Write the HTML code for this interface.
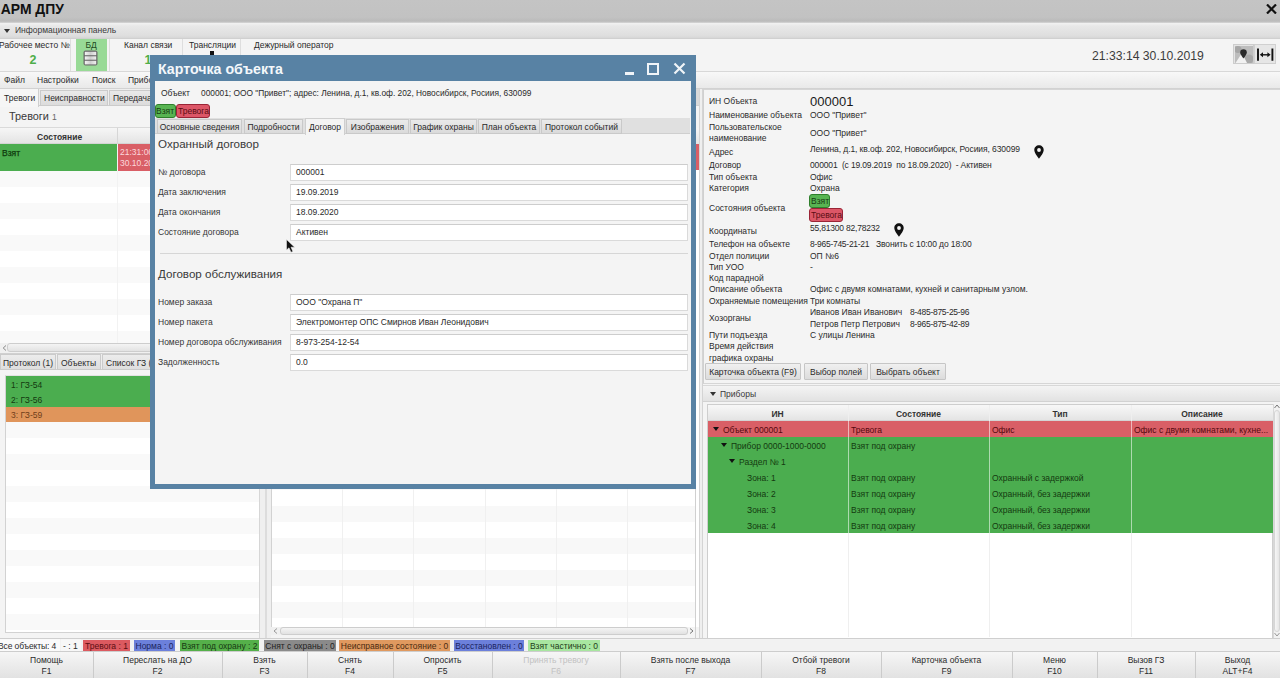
<!DOCTYPE html>
<html><head><meta charset="utf-8">
<style>
*{box-sizing:border-box;margin:0;padding:0}
html,body{width:1280px;height:678px;overflow:hidden}
body{position:relative;background:#f2f2f2;font-family:"Liberation Sans",sans-serif;font-size:8.5px;color:#2e2e2e}
.a{position:absolute;white-space:nowrap}
.t{position:absolute;white-space:nowrap;line-height:1;margin-top:0.6px}
</style></head><body>
<div class="a" style="left:0px;top:0px;width:1280px;height:23px;background:linear-gradient(#c4c4c4 0%,#c2c2c2 75%,#bababa 92%,#d8d8d8 100%)"></div>
<div class="t" style="left:0.8px;top:2.40px;font-size:13.9px;font-weight:bold;color:#111">АРМ ДПУ</div>
<svg class="a" style="left:1266px;top:4px" width="11" height="10" viewBox="0 0 11 10"><path d="M1 0.5L10 9.5M10 0.5L1 9.5" stroke="#111" stroke-width="2.2"/></svg>
<div class="a" style="left:0px;top:23px;width:1280px;height:16px;background:linear-gradient(#f2f2f2,#e8e8e8 20%,#dedede 85%,#d6d6d6);border-bottom:1px solid #d0d0d0"></div>
<svg class="a" style="left:4px;top:28.5px" width="6" height="4"><path d="M0 0H6L3.0 4Z" fill="#333"/></svg>
<div class="t" style="left:15px;top:25.80px;color:#3a3a3a">Информационная панель</div>
<div class="a" style="left:0px;top:39px;width:1280px;height:33px;background:#f4f4f4;border-bottom:1px solid #d8d8d8"></div>
<div class="a" style="left:70px;top:39px;width:1px;height:32px;background:#dedede"></div>
<div class="a" style="left:76px;top:39px;width:31px;height:32px;background:#98da96"></div>
<div class="a" style="left:109px;top:39px;width:1px;height:32px;background:#dedede"></div>
<div class="a" style="left:182px;top:39px;width:1px;height:32px;background:#dedede"></div>
<div class="a" style="left:240px;top:39px;width:1px;height:32px;background:#dedede"></div>
<div class="t" style="left:-1px;top:40.20px;color:#2a2a2a">Рабочее место №</div>
<div class="t" style="left:29.5px;top:53.20px;font-size:12.5px;font-weight:bold;color:#4fae4a">2</div>
<div class="t" style="left:85.5px;top:40.20px;color:#1f4a1f">БД</div>
<svg class="a" style="left:83px;top:49.5px" width="15" height="16" viewBox="0 0 15 16">
<defs><linearGradient id="dbg" x1="0" x2="1" y1="0" y2="0"><stop offset="0" stop-color="#f4f4f4"/><stop offset="0.5" stop-color="#cfcfcf"/><stop offset="1" stop-color="#eeeeee"/></linearGradient></defs>
<rect x="0.5" y="0.5" width="14" height="15" rx="2" fill="#6a6a6a"/>
<rect x="1.8" y="1.8" width="11.4" height="3.4" fill="url(#dbg)"/>
<rect x="1.8" y="6.3" width="11.4" height="3.4" fill="url(#dbg)"/>
<rect x="1.8" y="10.8" width="11.4" height="3.6" fill="url(#dbg)"/>
</svg>
<div class="t" style="left:124px;top:40.20px;color:#2a2a2a">Канал связи</div>
<div class="t" style="left:144.5px;top:53.20px;font-size:12.5px;font-weight:bold;color:#4fae4a">1</div>
<div class="t" style="left:189px;top:40.20px;color:#2a2a2a">Трансляции</div>
<div class="a" style="left:210px;top:51px;width:4px;height:4px;background:#111"></div>
<div class="t" style="left:254px;top:40.20px;color:#2a2a2a">Дежурный оператор</div>
<div class="t" style="left:1092px;top:49.30px;font-size:12.2px;color:#3c3c3c">21:33:14 30.10.2019</div>
<div class="a" style="left:1233px;top:44px;width:21px;height:20px;background:#e4e4e4;border:1px solid #cdcdcd"></div>
<svg class="a" style="left:1235px;top:46px" width="18" height="17" viewBox="0 0 18 17"><rect x="0" y="0" width="18" height="17" fill="#bdbdbd"/><circle cx="3" cy="3.5" r="3.5" fill="#a6a6a6"/><circle cx="14" cy="13" r="4.5" fill="#a8a8a8"/><path d="M0.5 17L7 7L12 17Z" fill="#f2f2f2"/><path d="M8.5 3.2a3.3 3.3 0 0 1 3.3 3.3c0 2.2-3.3 6-3.3 6s-3.3-3.8-3.3-6a3.3 3.3 0 0 1 3.3-3.3z" fill="#2a2a2a"/></svg>
<div class="a" style="left:1254px;top:44px;width:22px;height:20px;background:#e6e6e6;border:1px solid #d0d0d0"></div>
<svg class="a" style="left:1256px;top:48px" width="19" height="14" viewBox="0 0 19 14"><path d="M2 0.6V12.8M16.4 0.6V12.8" stroke="#111" stroke-width="1.9"/><path d="M6 6.8H12.5" stroke="#111" stroke-width="1.4"/><path d="M3.8 6.8L7 4.3V9.3ZM14.6 6.8L11.4 4.3V9.3Z" fill="#111"/></svg>
<div class="a" style="left:0px;top:72px;width:1280px;height:17px;background:linear-gradient(#f8f8f8,#e9e9e9);border-bottom:1px solid #d2d2d2"></div>
<div class="t" style="left:4px;top:75.80px;color:#2a2a2a">Файл</div>
<div class="t" style="left:37px;top:75.80px;color:#2a2a2a">Настройки</div>
<div class="t" style="left:92px;top:75.80px;color:#2a2a2a">Поиск</div>
<div class="t" style="left:128px;top:75.80px;color:#2a2a2a">Приборы</div>
<div class="a" style="left:0px;top:89px;width:260px;height:265px;background:#f4f4f4"></div>
<div class="a" style="left:0px;top:89px;width:260px;height:17px;background:#eeeeee;border-bottom:1px solid #cfcfcf"></div>
<div class="a" style="left:0px;top:89px;width:39px;height:18px;background:#f6f6f6;border-right:1px solid #cfcfcf"></div>
<div class="a" style="left:40px;top:90px;width:68px;height:16px;background:linear-gradient(#e9e9e9,#dcdcdc);border:1px solid #cbcbcb"></div>
<div class="a" style="left:109px;top:90px;width:151px;height:16px;background:linear-gradient(#e9e9e9,#dcdcdc);border:1px solid #cbcbcb"></div>
<div class="t" style="left:4px;top:93.80px;color:#2a2a2a">Тревоги</div>
<div class="t" style="left:44px;top:93.80px;color:#2a2a2a">Неисправности</div>
<div class="t" style="left:113px;top:93.80px;color:#2a2a2a">Передача</div>
<div class="t" style="left:9px;top:110.80px;font-size:10.9px;color:#3a3a3a">Тревоги <span style="font-size:8.5px;color:#666">1</span></div>
<div class="a" style="left:0px;top:127px;width:260px;height:17px;background:linear-gradient(#f6f6f6,#e4e4e4);border-top:1px solid #dadada;border-bottom:1px solid #d4d4d4"></div>
<div class="a" style="left:117px;top:128px;width:1px;height:16px;background:#d6d6d6"></div>
<div class="t" style="left:37px;top:132.30px;font-weight:bold;color:#333">Состояние</div>
<div class="a" style="left:0px;top:171px;width:260px;height:16px;background:#f9f9f9"></div>
<div class="a" style="left:0px;top:187px;width:260px;height:16px;background:#ffffff"></div>
<div class="a" style="left:0px;top:203px;width:260px;height:16px;background:#f9f9f9"></div>
<div class="a" style="left:0px;top:219px;width:260px;height:16px;background:#ffffff"></div>
<div class="a" style="left:0px;top:235px;width:260px;height:16px;background:#f9f9f9"></div>
<div class="a" style="left:0px;top:251px;width:260px;height:16px;background:#ffffff"></div>
<div class="a" style="left:0px;top:267px;width:260px;height:16px;background:#f9f9f9"></div>
<div class="a" style="left:0px;top:283px;width:260px;height:16px;background:#ffffff"></div>
<div class="a" style="left:0px;top:299px;width:260px;height:16px;background:#f9f9f9"></div>
<div class="a" style="left:0px;top:315px;width:260px;height:16px;background:#ffffff"></div>
<div class="a" style="left:0px;top:331px;width:260px;height:12px;background:#f9f9f9"></div>
<div class="a" style="left:117px;top:171px;width:1px;height:172px;background:#f2f2f2"></div>
<div class="a" style="left:0px;top:144px;width:117px;height:27px;background:#4bad4f"></div>
<div class="a" style="left:118px;top:144px;width:142px;height:27px;background:#d95f66"></div>
<div class="t" style="left:2px;top:148.00px;color:#0e3a0c;-webkit-text-stroke:0.25px #0e3a0c">Взят</div>
<div class="t" style="left:120px;top:146.6px;color:#fbd8dc;line-height:11px">21:31:06<br>30.10.2019</div>
<div class="a" style="left:0px;top:343px;width:260px;height:10px;background:#f0f0f0"></div>
<div class="a" style="left:7px;top:343px;width:253px;height:9px;background:linear-gradient(#f4f4f4,#e2e2e2);border:1px solid #cdcdcd;border-radius:3px"></div>
<svg class="a" style="left:2px;top:344.5px" width="5" height="6"><path d="M4 0.5L1.2 3L4 5.5" stroke="#888" stroke-width="1" fill="none"/></svg>
<div class="a" style="left:0px;top:353px;width:260px;height:1px;background:#d0d0d0"></div>
<div class="a" style="left:0px;top:354px;width:260px;height:285px;background:#f4f4f4"></div>
<div class="a" style="left:0px;top:354px;width:260px;height:16px;background:#eeeeee;border-bottom:1px solid #cfcfcf"></div>
<div class="a" style="left:0px;top:354px;width:56px;height:16px;background:linear-gradient(#ececec,#dedede);border:1px solid #cbcbcb"></div>
<div class="a" style="left:57px;top:354px;width:44px;height:16px;background:linear-gradient(#ececec,#dedede);border:1px solid #cbcbcb"></div>
<div class="a" style="left:102px;top:354px;width:158px;height:16px;background:linear-gradient(#ececec,#dedede);border:1px solid #cbcbcb"></div>
<div class="t" style="left:3px;top:358.70px;color:#2a2a2a">Протокол (1)</div>
<div class="t" style="left:61px;top:358.70px;color:#2a2a2a">Объекты</div>
<div class="t" style="left:106px;top:358.70px;color:#2a2a2a">Список ГЗ (3)</div>
<div class="a" style="left:5px;top:375px;width:255px;height:258px;background:#fff;border-left:1px solid #d2d2d2;border-top:1px solid #e2e2e2;border-bottom:1px solid #d2d2d2"></div>
<div class="a" style="left:6px;top:422px;width:254px;height:16px;background:#f9f9f9"></div>
<div class="a" style="left:6px;top:438px;width:254px;height:16px;background:#ffffff"></div>
<div class="a" style="left:6px;top:454px;width:254px;height:16px;background:#f9f9f9"></div>
<div class="a" style="left:6px;top:470px;width:254px;height:16px;background:#ffffff"></div>
<div class="a" style="left:6px;top:486px;width:254px;height:16px;background:#f9f9f9"></div>
<div class="a" style="left:6px;top:502px;width:254px;height:16px;background:#ffffff"></div>
<div class="a" style="left:6px;top:518px;width:254px;height:16px;background:#f9f9f9"></div>
<div class="a" style="left:6px;top:534px;width:254px;height:16px;background:#ffffff"></div>
<div class="a" style="left:6px;top:550px;width:254px;height:16px;background:#f9f9f9"></div>
<div class="a" style="left:6px;top:566px;width:254px;height:16px;background:#ffffff"></div>
<div class="a" style="left:6px;top:582px;width:254px;height:16px;background:#f9f9f9"></div>
<div class="a" style="left:6px;top:598px;width:254px;height:16px;background:#ffffff"></div>
<div class="a" style="left:6px;top:614px;width:254px;height:16px;background:#f9f9f9"></div>
<div class="a" style="left:6px;top:630px;width:254px;height:2px;background:#ffffff"></div>
<div class="a" style="left:6px;top:376px;width:254px;height:31px;background:#4bad4f"></div>
<div class="a" style="left:6px;top:407px;width:254px;height:15px;background:#e0955b"></div>
<div class="t" style="left:11px;top:380.60px;color:#143a10">1: ГЗ-54</div>
<div class="t" style="left:11px;top:395.60px;color:#143a10">2: ГЗ-56</div>
<div class="t" style="left:11px;top:410.60px;color:#70401a">3: ГЗ-59</div>
<div class="a" style="left:0px;top:638px;width:260px;height:1px;background:#cfcfcf"></div>
<div class="a" style="left:259px;top:89px;width:1px;height:550px;background:#d6d6d6"></div>
<div class="a" style="left:260px;top:89px;width:11px;height:550px;background:#efefef"></div>
<div class="a" style="left:265px;top:89px;width:2px;height:550px;background:#dcdcdc"></div>
<div class="a" style="left:271px;top:89px;width:428px;height:550px;background:#f4f4f4"></div>
<div class="a" style="left:271px;top:89px;width:428px;height:17px;background:#d9d9d9;border-bottom:1px solid #cfcfcf"></div>
<div class="a" style="left:271px;top:128px;width:428px;height:16px;background:linear-gradient(#f6f6f6,#e4e4e4)"></div>
<div class="a" style="left:271px;top:144px;width:428px;height:483px;background:#fff;border-left:1px solid #d2d2d2"></div>
<div class="a" style="left:272px;top:170px;width:423px;height:16px;background:#ffffff"></div>
<div class="a" style="left:272px;top:186px;width:423px;height:16px;background:#f8f8f8"></div>
<div class="a" style="left:272px;top:202px;width:423px;height:16px;background:#ffffff"></div>
<div class="a" style="left:272px;top:218px;width:423px;height:16px;background:#f8f8f8"></div>
<div class="a" style="left:272px;top:234px;width:423px;height:16px;background:#ffffff"></div>
<div class="a" style="left:272px;top:250px;width:423px;height:16px;background:#f8f8f8"></div>
<div class="a" style="left:272px;top:266px;width:423px;height:16px;background:#ffffff"></div>
<div class="a" style="left:272px;top:282px;width:423px;height:16px;background:#f8f8f8"></div>
<div class="a" style="left:272px;top:298px;width:423px;height:16px;background:#ffffff"></div>
<div class="a" style="left:272px;top:314px;width:423px;height:16px;background:#f8f8f8"></div>
<div class="a" style="left:272px;top:330px;width:423px;height:16px;background:#ffffff"></div>
<div class="a" style="left:272px;top:346px;width:423px;height:16px;background:#f8f8f8"></div>
<div class="a" style="left:272px;top:362px;width:423px;height:16px;background:#ffffff"></div>
<div class="a" style="left:272px;top:378px;width:423px;height:16px;background:#f8f8f8"></div>
<div class="a" style="left:272px;top:394px;width:423px;height:16px;background:#ffffff"></div>
<div class="a" style="left:272px;top:410px;width:423px;height:16px;background:#f8f8f8"></div>
<div class="a" style="left:272px;top:426px;width:423px;height:16px;background:#ffffff"></div>
<div class="a" style="left:272px;top:442px;width:423px;height:16px;background:#f8f8f8"></div>
<div class="a" style="left:272px;top:458px;width:423px;height:16px;background:#ffffff"></div>
<div class="a" style="left:272px;top:474px;width:423px;height:16px;background:#f8f8f8"></div>
<div class="a" style="left:272px;top:490px;width:423px;height:16px;background:#ffffff"></div>
<div class="a" style="left:272px;top:506px;width:423px;height:16px;background:#f8f8f8"></div>
<div class="a" style="left:272px;top:522px;width:423px;height:16px;background:#ffffff"></div>
<div class="a" style="left:272px;top:538px;width:423px;height:16px;background:#f8f8f8"></div>
<div class="a" style="left:272px;top:554px;width:423px;height:16px;background:#ffffff"></div>
<div class="a" style="left:272px;top:570px;width:423px;height:16px;background:#f8f8f8"></div>
<div class="a" style="left:272px;top:586px;width:423px;height:16px;background:#ffffff"></div>
<div class="a" style="left:272px;top:602px;width:423px;height:16px;background:#f8f8f8"></div>
<div class="a" style="left:272px;top:618px;width:423px;height:9px;background:#ffffff"></div>
<div class="a" style="left:342px;top:170px;width:1px;height:457px;background:#f0f0f0"></div>
<div class="a" style="left:413px;top:170px;width:1px;height:457px;background:#f0f0f0"></div>
<div class="a" style="left:485px;top:170px;width:1px;height:457px;background:#f0f0f0"></div>
<div class="a" style="left:556px;top:170px;width:1px;height:457px;background:#f0f0f0"></div>
<div class="a" style="left:627px;top:170px;width:1px;height:457px;background:#f0f0f0"></div>
<div class="a" style="left:272px;top:144px;width:427px;height:26px;background:#d95f66"></div>
<div class="a" style="left:271px;top:627px;width:424px;height:8px;background:#f0f0f0"></div>
<div class="a" style="left:280px;top:627px;width:408px;height:8px;background:linear-gradient(#f4f4f4,#e2e2e2);border:1px solid #cdcdcd;border-radius:3px"></div>
<div class="a" style="left:688px;top:627px;width:7px;height:8px;background:#f4f4f4"></div>
<svg class="a" style="left:689px;top:628px" width="5" height="6"><path d="M1 0.5L4 3L1 5.5" stroke="#777" stroke-width="1" fill="none"/></svg>
<svg class="a" style="left:273px;top:628px" width="5" height="6"><path d="M4 0.5L1 3L4 5.5" stroke="#999" stroke-width="1" fill="none"/></svg>
<div class="a" style="left:695px;top:144px;width:1px;height:494px;background:#d0d0d0"></div>
<div class="a" style="left:271px;top:638px;width:428px;height:1px;background:#cfcfcf"></div>
<div class="a" style="left:699px;top:89px;width:4px;height:550px;background:#efefef"></div>
<div class="a" style="left:699px;top:89px;width:1px;height:550px;background:#d4d4d4"></div>
<div class="a" style="left:702px;top:89px;width:1px;height:550px;background:#d4d4d4"></div>
<div class="a" style="left:703px;top:89px;width:577px;height:550px;background:#f4f4f4"></div>
<div class="a" style="left:703px;top:89px;width:577px;height:295px;border-left:1px solid #d0d0d0;border-top:1px solid #d6d6d6;border-bottom:1px solid #d6d6d6"></div>
<div class="t" style="left:709px;top:96.10px;color:#2a2a2a;">ИН Объекта</div>
<div class="t" style="left:810px;top:94.20px;font-size:13px;color:#1a1a1a">000001</div>
<div class="t" style="left:709px;top:110.70px;color:#2a2a2a;">Наименование объекта</div>
<div class="t" style="left:810px;top:110.70px;color:#2a2a2a;">ООО "Привет"</div>
<div class="t" style="left:709px;top:122.10px;color:#2a2a2a;">Пользовательское</div>
<div class="t" style="left:709px;top:133.50px;color:#2a2a2a;">наименование</div>
<div class="t" style="left:810px;top:128.30px;color:#2a2a2a;">ООО "Привет"</div>
<div class="t" style="left:709px;top:147.50px;color:#2a2a2a;">Адрес</div>
<div class="t" style="left:810px;top:144.40px;color:#2a2a2a;letter-spacing:-0.08px">Ленина, д.1, кв.оф. 202, Новосибирск, Росиия, 630099</div>
<div class="t" style="left:709px;top:160.90px;color:#2a2a2a;">Договор</div>
<div class="t" style="left:810px;top:160.90px;color:#2a2a2a;letter-spacing:-0.15px">000001&nbsp; (с 19.09.2019&nbsp; по 18.09.2020)&nbsp; - Активен</div>
<div class="t" style="left:709px;top:172.50px;color:#2a2a2a;">Тип объекта</div>
<div class="t" style="left:810px;top:172.50px;color:#2a2a2a;">Офис</div>
<div class="t" style="left:709px;top:183.90px;color:#2a2a2a;">Категория</div>
<div class="t" style="left:810px;top:183.90px;color:#2a2a2a;">Охрана</div>
<div class="a" style="left:809px;top:194px;width:21px;height:14px;background:#58b452;border:1px solid #2f7f2c;border-radius:3px"></div>
<div class="t" style="left:811px;top:196.80px;color:#173a12">Взят</div>
<div class="t" style="left:709px;top:203.70px;color:#2a2a2a;">Состояния объекта</div>
<div class="a" style="left:809px;top:208px;width:34px;height:14px;background:#dc5667;border:1px solid #9a2436;border-radius:3px"></div>
<div class="t" style="left:811px;top:210.80px;color:#5a0d12">Тревога</div>
<div class="t" style="left:709px;top:226.00px;color:#2a2a2a;">Координаты</div>
<div class="t" style="left:810px;top:223.30px;color:#2a2a2a;letter-spacing:-0.2px">55,81300 82,78232</div>
<div class="t" style="left:709px;top:239.20px;color:#2a2a2a;">Телефон на объекте</div>
<div class="t" style="left:810px;top:239.20px;color:#2a2a2a;letter-spacing:-0.27px">8-965-745-21-21</div>
<div class="t" style="left:876px;top:239.20px;color:#2a2a2a;letter-spacing:-0.1px">Звонить с 10:00 до 18:00</div>
<div class="t" style="left:709px;top:251.10px;color:#2a2a2a;">Отдел полиции</div>
<div class="t" style="left:810px;top:251.10px;color:#2a2a2a;">ОП №6</div>
<div class="t" style="left:709px;top:262.50px;color:#2a2a2a;">Тип УОО</div>
<div class="t" style="left:810px;top:262.50px;color:#2a2a2a;">-</div>
<div class="t" style="left:709px;top:273.70px;color:#2a2a2a;">Код парадной</div>
<div class="t" style="left:709px;top:284.90px;color:#2a2a2a;">Описание объекта</div>
<div class="t" style="left:810px;top:284.90px;color:#2a2a2a;">Офис с двумя комнатами, кухней и санитарным узлом.</div>
<div class="t" style="left:709px;top:296.90px;color:#2a2a2a;">Охраняемые помещения</div>
<div class="t" style="left:810px;top:296.90px;color:#2a2a2a;">Три комнаты</div>
<div class="t" style="left:709px;top:313.60px;color:#2a2a2a;">Хозорганы</div>
<div class="t" style="left:810px;top:307.40px;color:#2a2a2a;">Иванов Иван Иванович</div>
<div class="t" style="left:810px;top:319.40px;color:#2a2a2a;">Петров Петр Петрович</div>
<div class="t" style="left:910px;top:307.40px;color:#2a2a2a;letter-spacing:-0.27px">8-485-875-25-96</div>
<div class="t" style="left:910px;top:319.40px;color:#2a2a2a;letter-spacing:-0.27px">8-965-875-42-89</div>
<div class="t" style="left:709px;top:330.90px;color:#2a2a2a;">Пути подъезда</div>
<div class="t" style="left:810px;top:330.90px;color:#2a2a2a;">С улицы Ленина</div>
<div class="t" style="left:709px;top:341.90px;color:#2a2a2a;">Время действия</div>
<div class="t" style="left:709px;top:353.40px;color:#2a2a2a;">графика охраны</div>
<svg class="a" style="left:1034px;top:145px" width="10" height="14" viewBox="0 0 10 14"><path d="M5 0.3C2.3 0.3 0.3 2.4 0.3 5C0.3 8.3 5 13.7 5 13.7S9.7 8.3 9.7 5C9.7 2.4 7.7 0.3 5 0.3ZM5 3.1A1.9 1.9 0 1 1 5 6.9A1.9 1.9 0 1 1 5 3.1Z" fill="#111" fill-rule="evenodd"/></svg>
<svg class="a" style="left:894px;top:223px" width="10" height="14" viewBox="0 0 10 14"><path d="M5 0.3C2.3 0.3 0.3 2.4 0.3 5C0.3 8.3 5 13.7 5 13.7S9.7 8.3 9.7 5C9.7 2.4 7.7 0.3 5 0.3ZM5 3.1A1.9 1.9 0 1 1 5 6.9A1.9 1.9 0 1 1 5 3.1Z" fill="#111" fill-rule="evenodd"/></svg>
<div class="a" style="left:705px;top:363px;width:96px;height:17px;background:linear-gradient(#f0f0f0,#dcdcdc);border:1px solid #c6c6c6;border-radius:1px"></div>
<div class="t" style="left:705px;top:367.3px;width:96px;text-align:center;color:#2a2a2a">Карточка объекта (F9)</div>
<div class="a" style="left:804px;top:363px;width:64px;height:17px;background:linear-gradient(#f0f0f0,#dcdcdc);border:1px solid #c6c6c6;border-radius:1px"></div>
<div class="t" style="left:804px;top:367.3px;width:64px;text-align:center;color:#2a2a2a">Выбор полей</div>
<div class="a" style="left:870px;top:363px;width:76px;height:17px;background:linear-gradient(#f0f0f0,#dcdcdc);border:1px solid #c6c6c6;border-radius:1px"></div>
<div class="t" style="left:870px;top:367.3px;width:76px;text-align:center;color:#2a2a2a">Выбрать объект</div>
<div class="a" style="left:703px;top:385px;width:577px;height:17px;background:linear-gradient(#f4f4f4,#e2e2e2);border-top:1px solid #d8d8d8;border-bottom:1px solid #d2d2d2"></div>
<svg class="a" style="left:710px;top:392px" width="6" height="4"><path d="M0 0H6L3.0 4Z" fill="#333"/></svg>
<div class="t" style="left:720px;top:389.40px;color:#2a2a2a;color:#3a3a3a">Приборы</div>
<div class="a" style="left:707px;top:404px;width:566px;height:235px;background:#fff;border:1px solid #cecece"></div>
<div class="a" style="left:708px;top:405px;width:565px;height:16px;background:linear-gradient(#f8f8f8,#e4e4e4);border-bottom:1px solid #d4d4d4"></div>
<div class="t" style="left:707px;top:409.3px;width:141px;text-align:center;font-weight:bold;color:#333">ИН</div>
<div class="t" style="left:848px;top:409.3px;width:141px;text-align:center;font-weight:bold;color:#333">Состояние</div>
<div class="t" style="left:989px;top:409.3px;width:142px;text-align:center;font-weight:bold;color:#333">Тип</div>
<div class="t" style="left:1131px;top:409.3px;width:142px;text-align:center;font-weight:bold;color:#333">Описание</div>
<div class="a" style="left:848px;top:405px;width:1px;height:232px;background:#efefef"></div>
<div class="a" style="left:989px;top:405px;width:1px;height:232px;background:#efefef"></div>
<div class="a" style="left:1131px;top:405px;width:1px;height:232px;background:#efefef"></div>
<div class="a" style="left:708px;top:421px;width:565px;height:16px;background:#d95f66"></div>
<div class="a" style="left:708px;top:437px;width:565px;height:96px;background:#4bad4f"></div>
<div class="a" style="left:848px;top:421px;width:1px;height:112px;background:rgba(255,255,255,0.55)"></div>
<div class="a" style="left:989px;top:421px;width:1px;height:112px;background:rgba(255,255,255,0.55)"></div>
<div class="a" style="left:1131px;top:421px;width:1px;height:112px;background:rgba(255,255,255,0.55)"></div>
<svg class="a" style="left:712.5px;top:427px" width="6" height="4"><path d="M0 0H6L3.0 4Z" fill="#111"/></svg>
<div class="t" style="left:723px;top:425.40px;color:#2a2a2a;color:#55080e">Объект 000001</div>
<div class="t" style="left:851px;top:425.40px;color:#2a2a2a;color:#55080e">Тревога</div>
<div class="t" style="left:992px;top:425.40px;color:#2a2a2a;color:#55080e">Офис</div>
<div class="t" style="left:1134px;top:425.40px;color:#2a2a2a;color:#55080e">Офис с двумя комнатами, кухне...</div>
<svg class="a" style="left:720.5px;top:443px" width="6" height="4"><path d="M0 0H6L3.0 4Z" fill="#111"/></svg>
<div class="t" style="left:731px;top:441.40px;color:#2a2a2a;color:#143a10">Прибор 0000-1000-0000</div>
<div class="t" style="left:851px;top:441.40px;color:#2a2a2a;color:#143a10">Взят под охрану</div>
<svg class="a" style="left:728.5px;top:459px" width="6" height="4"><path d="M0 0H6L3.0 4Z" fill="#111"/></svg>
<div class="t" style="left:739px;top:457.40px;color:#2a2a2a;color:#143a10">Раздел № 1</div>
<div class="t" style="left:747px;top:473.40px;color:#2a2a2a;color:#143a10">Зона: 1</div>
<div class="t" style="left:851px;top:473.40px;color:#2a2a2a;color:#143a10">Взят под охрану</div>
<div class="t" style="left:992px;top:473.40px;color:#2a2a2a;color:#143a10">Охранный с задержкой</div>
<div class="t" style="left:747px;top:489.40px;color:#2a2a2a;color:#143a10">Зона: 2</div>
<div class="t" style="left:851px;top:489.40px;color:#2a2a2a;color:#143a10">Взят под охрану</div>
<div class="t" style="left:992px;top:489.40px;color:#2a2a2a;color:#143a10">Охранный, без задержки</div>
<div class="t" style="left:747px;top:505.40px;color:#2a2a2a;color:#143a10">Зона: 3</div>
<div class="t" style="left:851px;top:505.40px;color:#2a2a2a;color:#143a10">Взят под охрану</div>
<div class="t" style="left:992px;top:505.40px;color:#2a2a2a;color:#143a10">Охранный, без задержки</div>
<div class="t" style="left:747px;top:521.40px;color:#2a2a2a;color:#143a10">Зона: 4</div>
<div class="t" style="left:851px;top:521.40px;color:#2a2a2a;color:#143a10">Взят под охрану</div>
<div class="t" style="left:992px;top:521.40px;color:#2a2a2a;color:#143a10">Охранный, без задержки</div>
<div class="a" style="left:1273px;top:404px;width:7px;height:235px;background:#f2f2f2;border-left:1px solid #d8d8d8"></div>
<div class="a" style="left:1274px;top:410px;width:6px;height:222px;background:linear-gradient(90deg,#f6f6f6,#e6e6e6);border:1px solid #d6d6d6;border-radius:3px"></div>
<svg class="a" style="left:1274px;top:404px" width="6" height="5"><path d="M0.5 4L3 1L5.5 4" stroke="#777" stroke-width="1" fill="none"/></svg>
<svg class="a" style="left:1274px;top:632px" width="6" height="5"><path d="M0.5 1L3 4L5.5 1" stroke="#999" stroke-width="1" fill="none"/></svg>
<div class="a" style="left:150px;top:55px;width:546px;height:434px;background:#5882a4"></div>
<div class="a" style="left:155px;top:81px;width:536px;height:403px;background:#f4f4f4"></div>
<div class="t" style="left:158px;top:61.80px;font-size:14.2px;font-weight:bold;color:#f4f8fb">Карточка объекта</div>
<div class="a" style="left:625px;top:72px;width:9px;height:3px;background:#f0f4f8"></div>
<div class="a" style="left:647px;top:63px;width:12px;height:12px;border:2px solid #f0f4f8;border-top-width:2.5px"></div>
<svg class="a" style="left:673px;top:62px" width="13" height="13" viewBox="0 0 13 13"><path d="M1.5 1.5L11.5 11.5M11.5 1.5L1.5 11.5" stroke="#f0f4f8" stroke-width="2.2"/></svg>
<div class="t" style="left:161px;top:88.50px;color:#2a2a2a">Объект</div>
<div class="t" style="left:201px;top:88.50px;color:#2a2a2a;font-size:8.35px">000001; ООО "Привет"; адрес: Ленина, д.1, кв.оф. 202, Новосибирск, Росиия, 630099</div>
<div class="a" style="left:155px;top:104px;width:21px;height:14px;background:#58b452;border:1px solid #2f7f2c;border-radius:3px"></div>
<div class="t" style="left:156px;top:106.80px;color:#173a12">Взят</div>
<div class="a" style="left:176px;top:104px;width:34px;height:14px;background:#dc5667;border:1px solid #9a2436;border-radius:3px"></div>
<div class="t" style="left:178px;top:106.80px;color:#5a0d12">Тревога</div>
<div class="a" style="left:155px;top:118px;width:535px;height:16px;background:#e0e0e0;border-bottom:1px solid #cfcfcf"></div>
<div class="a" style="left:157px;top:119px;width:85px;height:15px;background:linear-gradient(#eaeaea,#dadada);border:1px solid #c9c9c9"></div>
<div class="t" style="left:157px;top:122.8px;width:85px;text-align:center;color:#2a2a2a">Основные сведения</div>
<div class="a" style="left:244px;top:119px;width:59px;height:15px;background:linear-gradient(#eaeaea,#dadada);border:1px solid #c9c9c9"></div>
<div class="t" style="left:244px;top:122.8px;width:59px;text-align:center;color:#2a2a2a">Подробности</div>
<div class="a" style="left:305px;top:118px;width:40px;height:17px;background:#f4f4f4;border:1px solid #cfcfcf;border-bottom:none"></div>
<div class="t" style="left:305px;top:122.8px;width:40px;text-align:center;color:#2a2a2a">Договор</div>
<div class="a" style="left:346px;top:119px;width:63px;height:15px;background:linear-gradient(#eaeaea,#dadada);border:1px solid #c9c9c9"></div>
<div class="t" style="left:346px;top:122.8px;width:63px;text-align:center;color:#2a2a2a">Изображения</div>
<div class="a" style="left:410px;top:119px;width:67px;height:15px;background:linear-gradient(#eaeaea,#dadada);border:1px solid #c9c9c9"></div>
<div class="t" style="left:410px;top:122.8px;width:67px;text-align:center;color:#2a2a2a">График охраны</div>
<div class="a" style="left:478px;top:119px;width:62px;height:15px;background:linear-gradient(#eaeaea,#dadada);border:1px solid #c9c9c9"></div>
<div class="t" style="left:478px;top:122.8px;width:62px;text-align:center;color:#2a2a2a">План объекта</div>
<div class="a" style="left:541px;top:119px;width:81px;height:15px;background:linear-gradient(#eaeaea,#dadada);border:1px solid #c9c9c9"></div>
<div class="t" style="left:541px;top:122.8px;width:81px;text-align:center;color:#2a2a2a">Протокол событий</div>
<div class="t" style="left:158px;top:137.80px;font-size:11.6px;color:#3a3a3a">Охранный договор</div>
<div class="t" style="left:158px;top:267.90px;font-size:11.6px;color:#3a3a3a">Договор обслуживания</div>
<div class="a" style="left:160px;top:253px;width:528px;height:1px;background:#d6d6d6"></div>
<div class="a" style="left:290px;top:164px;width:398px;height:17px;background:#fff;border:1px solid #dadada;border-top-color:#cdcdcd"></div>
<div class="t" style="left:158px;top:167.70px;color:#363636">№ договора</div>
<div class="t" style="left:296px;top:167.70px;color:#2a2a2a">000001</div>
<div class="a" style="left:290px;top:184px;width:398px;height:17px;background:#fff;border:1px solid #dadada;border-top-color:#cdcdcd"></div>
<div class="t" style="left:158px;top:187.70px;color:#363636">Дата заключения</div>
<div class="t" style="left:296px;top:187.70px;color:#2a2a2a">19.09.2019</div>
<div class="a" style="left:290px;top:204px;width:398px;height:17px;background:#fff;border:1px solid #dadada;border-top-color:#cdcdcd"></div>
<div class="t" style="left:158px;top:207.70px;color:#363636">Дата окончания</div>
<div class="t" style="left:296px;top:207.70px;color:#2a2a2a">18.09.2020</div>
<div class="a" style="left:290px;top:224px;width:398px;height:17px;background:#fff;border:1px solid #dadada;border-top-color:#cdcdcd"></div>
<div class="t" style="left:158px;top:227.70px;color:#363636">Состояние договора</div>
<div class="t" style="left:296px;top:227.70px;color:#2a2a2a">Активен</div>
<div class="a" style="left:290px;top:294px;width:398px;height:17px;background:#fff;border:1px solid #dadada;border-top-color:#cdcdcd"></div>
<div class="t" style="left:158px;top:297.70px;color:#363636">Номер заказа</div>
<div class="t" style="left:296px;top:297.70px;color:#2a2a2a">ООО "Охрана П"</div>
<div class="a" style="left:290px;top:314px;width:398px;height:17px;background:#fff;border:1px solid #dadada;border-top-color:#cdcdcd"></div>
<div class="t" style="left:158px;top:317.70px;color:#363636">Номер пакета</div>
<div class="t" style="left:296px;top:317.70px;color:#2a2a2a">Электромонтер ОПС Смирнов Иван Леонидович</div>
<div class="a" style="left:290px;top:334px;width:398px;height:17px;background:#fff;border:1px solid #dadada;border-top-color:#cdcdcd"></div>
<div class="t" style="left:158px;top:337.70px;color:#363636">Номер договора обслуживания</div>
<div class="t" style="left:296px;top:337.70px;color:#2a2a2a">8-973-254-12-54</div>
<div class="a" style="left:290px;top:354px;width:398px;height:17px;background:#fff;border:1px solid #dadada;border-top-color:#cdcdcd"></div>
<div class="t" style="left:158px;top:357.70px;color:#363636">Задолженность</div>
<div class="t" style="left:296px;top:357.70px;color:#2a2a2a">0.0</div>
<svg class="a" style="left:285.5px;top:238.5px" width="10" height="14" viewBox="0 0 10 14"><path d="M0.5 0.5V11L3 8.8L5 13.2L6.9 12.4L5 8.2H8.6Z" fill="#111" stroke="#f4f4f4" stroke-width="0.5"/></svg>
<div class="a" style="left:0px;top:638px;width:1280px;height:1px;background:#cfcfcf"></div>
<div class="a" style="left:0px;top:639px;width:1280px;height:13px;background:#f2f2f2"></div>
<div class="a" style="left:0px;top:639px;width:60px;height:12px;background:#fafafa"></div>
<div class="t" style="left:-2px;top:641.60px;color:#2a2a2a;letter-spacing:-0.1px">Все объекты: 4</div>
<div class="a" style="left:61px;top:639px;width:20px;height:12px;background:#f7f7f7"></div>
<div class="t" style="left:63px;top:641.60px;color:#2a2a2a">- : 1</div>
<div class="a" style="left:83px;top:640px;width:47px;height:11px;background:#dc5a60"></div>
<div class="t" style="left:83px;top:641.6px;width:47px;text-align:center;color:#5a0d12">Тревога : 1</div>
<div class="a" style="left:134px;top:640px;width:41px;height:11px;background:#6c80db"></div>
<div class="t" style="left:134px;top:641.6px;width:41px;text-align:center;color:#1b2460">Норма : 0</div>
<div class="a" style="left:180px;top:640px;width:79px;height:11px;background:#55b04a"></div>
<div class="t" style="left:180px;top:641.6px;width:79px;text-align:center;color:#173a12">Взят под охрану : 2</div>
<div class="a" style="left:264px;top:640px;width:72px;height:11px;background:#8a8a8a"></div>
<div class="t" style="left:264px;top:641.6px;width:72px;text-align:center;color:#222">Снят с охраны : 0</div>
<div class="a" style="left:339px;top:640px;width:111px;height:11px;background:#e0995f"></div>
<div class="t" style="left:339px;top:641.6px;width:111px;text-align:center;color:#4a2a10">Неисправное состояние : 0</div>
<div class="a" style="left:454px;top:640px;width:70px;height:11px;background:#6c80db"></div>
<div class="t" style="left:454px;top:641.6px;width:70px;text-align:center;color:#1b2460">Восстановлен : 0</div>
<div class="a" style="left:528px;top:640px;width:72px;height:11px;background:#a8e6a0"></div>
<div class="t" style="left:528px;top:641.6px;width:72px;text-align:center;color:#1d3d18">Взят частично : 0</div>
<div class="a" style="left:0px;top:651px;width:1280px;height:27px;background:linear-gradient(#f6f6f6,#e2e2e2);border-top:1px solid #cdcdcd"></div>
<div class="t" style="left:0px;top:655.6px;width:93px;text-align:center;color:#2a2a2a">Помощь</div>
<div class="t" style="left:0px;top:666.6px;width:93px;text-align:center;color:#2a2a2a">F1</div>
<div class="a" style="left:93px;top:652px;width:1px;height:26px;background:#cbcbcb"></div>
<div class="t" style="left:93px;top:655.6px;width:129px;text-align:center;color:#2a2a2a">Переслать на ДО</div>
<div class="t" style="left:93px;top:666.6px;width:129px;text-align:center;color:#2a2a2a">F2</div>
<div class="a" style="left:222px;top:652px;width:1px;height:26px;background:#cbcbcb"></div>
<div class="t" style="left:222px;top:655.6px;width:85px;text-align:center;color:#2a2a2a">Взять</div>
<div class="t" style="left:222px;top:666.6px;width:85px;text-align:center;color:#2a2a2a">F3</div>
<div class="a" style="left:307px;top:652px;width:1px;height:26px;background:#cbcbcb"></div>
<div class="t" style="left:307px;top:655.6px;width:86px;text-align:center;color:#2a2a2a">Снять</div>
<div class="t" style="left:307px;top:666.6px;width:86px;text-align:center;color:#2a2a2a">F4</div>
<div class="a" style="left:393px;top:652px;width:1px;height:26px;background:#cbcbcb"></div>
<div class="t" style="left:393px;top:655.6px;width:99px;text-align:center;color:#2a2a2a">Опросить</div>
<div class="t" style="left:393px;top:666.6px;width:99px;text-align:center;color:#2a2a2a">F5</div>
<div class="a" style="left:492px;top:652px;width:1px;height:26px;background:#cbcbcb"></div>
<div class="t" style="left:492px;top:655.6px;width:128px;text-align:center;color:#c2c2c2">Принять тревогу</div>
<div class="t" style="left:492px;top:666.6px;width:128px;text-align:center;color:#c2c2c2">F6</div>
<div class="a" style="left:620px;top:652px;width:1px;height:26px;background:#cbcbcb"></div>
<div class="t" style="left:620px;top:655.6px;width:141px;text-align:center;color:#2a2a2a">Взять после выхода</div>
<div class="t" style="left:620px;top:666.6px;width:141px;text-align:center;color:#2a2a2a">F7</div>
<div class="a" style="left:761px;top:652px;width:1px;height:26px;background:#cbcbcb"></div>
<div class="t" style="left:761px;top:655.6px;width:120px;text-align:center;color:#2a2a2a">Отбой тревоги</div>
<div class="t" style="left:761px;top:666.6px;width:120px;text-align:center;color:#2a2a2a">F8</div>
<div class="a" style="left:881px;top:652px;width:1px;height:26px;background:#cbcbcb"></div>
<div class="t" style="left:881px;top:655.6px;width:131px;text-align:center;color:#2a2a2a">Карточка объекта</div>
<div class="t" style="left:881px;top:666.6px;width:131px;text-align:center;color:#2a2a2a">F9</div>
<div class="a" style="left:1012px;top:652px;width:1px;height:26px;background:#cbcbcb"></div>
<div class="t" style="left:1012px;top:655.6px;width:85px;text-align:center;color:#2a2a2a">Меню</div>
<div class="t" style="left:1012px;top:666.6px;width:85px;text-align:center;color:#2a2a2a">F10</div>
<div class="a" style="left:1097px;top:652px;width:1px;height:26px;background:#cbcbcb"></div>
<div class="t" style="left:1097px;top:655.6px;width:98px;text-align:center;color:#2a2a2a">Вызов ГЗ</div>
<div class="t" style="left:1097px;top:666.6px;width:98px;text-align:center;color:#2a2a2a">F11</div>
<div class="a" style="left:1195px;top:652px;width:1px;height:26px;background:#cbcbcb"></div>
<div class="t" style="left:1195px;top:655.6px;width:85px;text-align:center;color:#2a2a2a">Выход</div>
<div class="t" style="left:1195px;top:666.6px;width:85px;text-align:center;color:#2a2a2a">ALT+F4</div>
</body></html>
